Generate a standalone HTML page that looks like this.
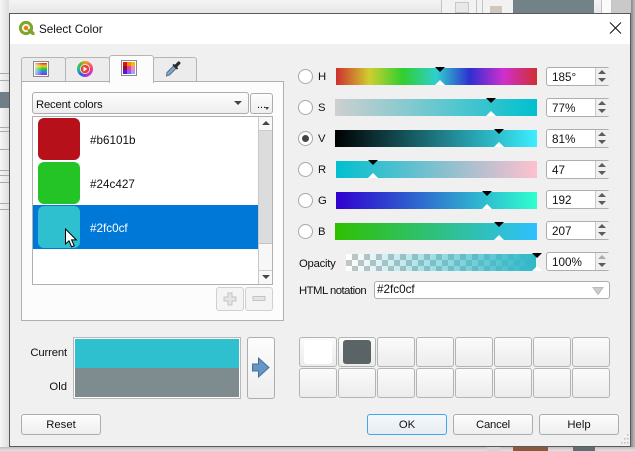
<!DOCTYPE html>
<html><head><meta charset="utf-8">
<style>
html,body{margin:0;padding:0}
body{width:635px;height:451px;position:relative;overflow:hidden;background:#f4f4f4;font:11.7px "Liberation Sans",sans-serif;color:#111}
div,span,svg{position:absolute;box-sizing:border-box}
.t{white-space:nowrap;line-height:14px}
.w{font-size:11.3px}
.btn{background:linear-gradient(#fdfdfd,#eeeeee);border:1px solid #adadad;border-radius:3px}
.tab{background:#ececec;border:1px solid #b5b5b5;border-bottom:none;border-radius:3px 3px 0 0}
.bar{height:17px}
.mk{width:0;height:0;border-left:5px solid transparent;border-right:5px solid transparent}
.mt{border-top:5px solid #000}
.mb{border-bottom:5px solid #fff}
.radio{width:15px;height:15px;border-radius:50%;border:1px solid #a8a8a8;background:#fff;left:298px}
.spin{left:546px;width:64px;height:19px;background:#fff;border:1px solid #adadad;border-radius:3px}
.spin i{position:absolute;left:48px;top:0;bottom:0;width:14px;background:#efefef;border-left:1px solid #c8c8c8}
.up,.dn{position:absolute;left:51px;width:0;height:0;border-left:4px solid transparent;border-right:4px solid transparent}
.up{top:2px;border-bottom:4px solid #5c5c5c}
.dn{top:10px;border-top:4px solid #5c5c5c}
.spin .t{left:5px;top:3px}
.cell{width:38px;height:30px;background:linear-gradient(#fbfbfb,#ececec);border:1px solid #b4b4b4;border-radius:3px}
</style></head><body>

<!-- background window behind -->
<div style="left:0;top:0;width:635px;height:13px;background:linear-gradient(#f4f4f4,#e6e6e6)"></div>
<div style="left:441px;top:0;width:72px;height:13px;border-left:1px solid #c4c4c4;background:#f2f2f2"></div>
<div style="left:476px;top:0;width:7px;height:13px;border-left:1px solid #c4c4c4;border-right:1px solid #c4c4c4"></div>
<div style="left:455px;top:2px;width:14px;height:11px;background:#e8e8e8;border:1px solid #c8c8c8"></div>
<div style="left:490px;top:6px;width:12px;height:7px;background:#cfc8ba"></div>
<div style="left:513px;top:0;width:81px;height:13px;background:#728286"></div>
<div style="left:601px;top:0;width:11px;height:13px;background:#fafafa;border-left:1px solid #c4c4c4;border-right:1px solid #c4c4c4"></div>
<div style="left:612px;top:0;width:23px;height:13px;background:#c9c9c9"></div>
<div style="left:631px;top:0;width:4px;height:451px;background:linear-gradient(90deg,#8a8a8a,#bdbdbd)"></div>

<div style="left:0;top:0;width:9px;height:451px;background:linear-gradient(90deg,#f6f6f6,#dedede)"></div>
<div style="left:0;top:73px;width:9px;height:1px;background:#aaa"></div>
<div style="left:0;top:80px;width:9px;height:1px;background:#aaa"></div>
<div style="left:0;top:92px;width:9px;height:16px;background:#6f7f85"></div>
<div style="left:0;top:127px;width:9px;height:1px;background:#aaa"></div>
<div style="left:0;top:131px;width:9px;height:1px;background:#aaa"></div>
<div style="left:0;top:149px;width:9px;height:1px;background:#aaa"></div>
<div style="left:0;top:170px;width:9px;height:1px;background:#aaa"></div>
<div style="left:0;top:175px;width:9px;height:1px;background:#aaa"></div>
<div style="left:0;top:182px;width:9px;height:1px;background:#aaa"></div>
<div style="left:0;top:203px;width:9px;height:1px;background:#aaa"></div>
<div style="left:0;top:209px;width:9px;height:1px;background:#aaa"></div>

<div style="left:0;top:447px;width:635px;height:4px;background:linear-gradient(#bdbdbd,#e4e4e4)"></div>
<div style="left:487px;top:447px;width:13px;height:4px;background:#d4d4d4"></div>
<div style="left:513px;top:447px;width:35px;height:4px;background:#8a5a40"></div>
<div style="left:573px;top:447px;width:22px;height:4px;background:#5f6e72"></div>

<!-- dialog -->
<div style="left:9px;top:13px;width:622px;height:434px;background:#f0f0f0;border:1px solid #5a5a5a"></div>
<div style="left:10px;top:14px;width:620px;height:30px;background:#fff"></div>

<!-- title -->
<svg style="left:18px;top:20px" width="17" height="17" viewBox="0 0 17 17">
<circle cx="8" cy="8" r="5.6" fill="#f7f3e4" stroke="#7da62f" stroke-width="3"/>
<circle cx="8" cy="8" r="2.2" fill="#ee7913"/>
<path d="M9 10l5 5h2.500v-2.500l-4-4z" fill="#7da62f"/>
</svg>
<div class="t" style="left:39px;top:23px">Select Color</div>
<svg style="left:609px;top:21px" width="14" height="14" viewBox="0 0 14 14"><path d="M1 1.500l11 11M12 1.500l-11 11" stroke="#111" stroke-width="1" fill="none"/></svg>

<!-- tabs -->
<div class="tab" style="left:21px;top:57px;width:45px;height:25px"></div>
<div class="tab" style="left:65px;top:57px;width:45px;height:25px"></div>
<div class="tab" style="left:153px;top:57px;width:44px;height:25px"></div>
<!-- pane -->
<div style="left:21px;top:81px;width:263px;height:240px;background:#fcfcfc;border:1px solid #b0b0b0"></div>
<div class="tab" style="left:109px;top:55px;width:45px;height:28px;background:#fcfcfc;border-bottom:none"></div>

<!-- tab icons -->
<svg style="left:33px;top:61px" width="16" height="16" viewBox="0 0 16 16">
<defs><linearGradient id="r" x1="0" y1="0" x2="0" y2="1"><stop offset="0" stop-color="#e22"/><stop offset=".25" stop-color="#ec2"/><stop offset=".5" stop-color="#2c2"/><stop offset=".72" stop-color="#28e"/><stop offset="1" stop-color="#92e"/></linearGradient>
<linearGradient id="w" x1="0" y1="0" x2="1" y2="0"><stop offset="0" stop-color="#fff" stop-opacity=".65"/><stop offset=".6" stop-color="#fff" stop-opacity="0"/></linearGradient></defs>
<rect x=".5" y=".5" width="15" height="15" fill="#fff" stroke="#8a8a8a"/>
<rect x="2" y="2" width="12" height="12" fill="url(#r)"/><rect x="2" y="2" width="12" height="12" fill="url(#w)"/>
</svg>
<div style="left:77px;top:61px;width:16px;height:16px;border-radius:50%;background:conic-gradient(#f0a020,#f03a90 25%,#b030e0 45%,#3060e0 60%,#20c0a0 75%,#40c030 88%,#f0a020)"></div>
<div style="left:80px;top:64px;width:10px;height:10px;border-radius:50%;background:#fff"></div>
<svg style="left:77px;top:61px" width="16" height="16" viewBox="0 0 16 16">
<circle cx="8" cy="8" r="4.300" fill="#e8452c"/><path d="M6.500 5.500l3.700 2.500-3.700 2.500z" fill="#fff"/>
</svg>
<svg style="left:121px;top:60px" width="16" height="16" viewBox="0 0 16 16">
<rect x=".5" y=".5" width="15" height="15" fill="#fff" stroke="#8a8a8a"/>
<rect x="2" y="2" width="4" height="4" fill="#e01010"/><rect x="6" y="2" width="4" height="4" fill="#f08a10"/><rect x="10" y="2" width="4" height="4" fill="#f5b810"/>
<rect x="2" y="6" width="4" height="4" fill="#8a1040"/><rect x="6" y="6" width="4" height="4" fill="#e0409a"/><rect x="10" y="6" width="4" height="4" fill="#f08ac0"/>
<rect x="2" y="10" width="4" height="4" fill="#6a10d0"/><rect x="6" y="10" width="4" height="4" fill="#8a60e8"/><rect x="10" y="10" width="4" height="4" fill="#b09af0"/>
</svg>
<svg style="left:165px;top:60px" width="17" height="17" viewBox="0 0 17 17">
<path d="M1.500 16l.5-3.500 6.500-6.500 2.500 2.500-6.500 6.500z" fill="#7fa8d0" stroke="#56687a" stroke-width=".9"/>
<path d="M9 4.500l1.500-.3 2.500-2.700c1.200-.8 3.200 1.200 2.300 2.400l-2.600 2.500-.3 1.600z" fill="#2a2a2a"/>
<path d="M8 4.500l4.500 4.500" stroke="#2a2a2a" stroke-width="1.700"/>
</svg>

<!-- combo -->
<div class="btn" style="left:32px;top:92px;width:217px;height:22px"></div>
<div class="t w" style="left:36px;top:98px;letter-spacing:-.2px">Recent colors</div>
<div style="left:234px;top:101px;width:0;height:0;border-left:4px solid transparent;border-right:4px solid transparent;border-top:4px solid #444"></div>
<div class="btn" style="left:250px;top:93px;width:23px;height:21px"></div>
<div class="t" style="left:257px;top:100px;font-size:11px;line-height:10px">...</div>
<div style="left:265px;top:107px;width:0;height:0;border-left:2.500px solid transparent;border-right:2.500px solid transparent;border-top:3px solid #444"></div>

<!-- list -->
<div style="left:32px;top:116px;width:241px;height:169px;background:#fff;border:1px solid #b0b0b0"></div>
<div style="left:33px;top:205px;width:225px;height:44px;background:#0078d7"></div>
<div style="left:38px;top:118px;width:42px;height:42px;background:#b6101b;border-radius:6px"></div>
<div style="left:38px;top:162px;width:42px;height:42px;background:#24c427;border-radius:6px"></div>
<div style="left:38px;top:206px;width:42px;height:42px;background:#2fc0cf;border-radius:6px"></div>
<div class="t" style="left:90px;top:134px">#b6101b</div>
<div class="t" style="left:90px;top:178px">#24c427</div>
<div class="t" style="left:90px;top:222px;color:#fff">#2fc0cf</div>
<svg style="left:64px;top:228px" width="15" height="21" viewBox="0 0 15 21"><path d="M1.500 1v15l3.500-3.200 2.600 6 2.600-1.100-2.600-5.800h4.700z" fill="#fff" stroke="#000" stroke-width="1"/></svg>
<!-- scrollbar -->
<div style="left:258px;top:117px;width:14px;height:167px;background:#f7f7f7;border-left:1px solid #c8c8c8"></div>
<div style="left:259px;top:130px;width:13px;height:1px;background:#ccc"></div>
<div style="left:259px;top:131px;width:13px;height:113px;background:#dcdcdc;border-bottom:1px solid #c4c4c4"></div>
<div style="left:259px;top:270px;width:13px;height:1px;background:#ccc"></div>
<div style="left:261.500px;top:121px;width:0;height:0;border-left:4px solid transparent;border-right:4px solid transparent;border-bottom:4px solid #444"></div>
<div style="left:261.500px;top:275px;width:0;height:0;border-left:4px solid transparent;border-right:4px solid transparent;border-top:4px solid #444"></div>
<!-- plus minus -->
<div class="btn" style="left:216px;top:287px;width:28px;height:24px;background:#f4f4f4;border-color:#d0d0d0"></div>
<div class="btn" style="left:245px;top:287px;width:28px;height:24px;background:#f4f4f4;border-color:#d0d0d0"></div>
<svg style="left:223px;top:292px" width="14" height="14" viewBox="0 0 14 14"><path d="M5 1h4v4h4v4h-4v4h-4v-4h-4v-4h4z" fill="#e4e4e4" stroke="#c4c4c4"/></svg>
<svg style="left:252px;top:295px" width="14" height="8" viewBox="0 0 14 8"><path d="M1 1.500h12v4h-12z" fill="#e4e4e4" stroke="#c4c4c4"/></svg>

<!-- radios + labels -->
<div class="radio" style="top:69px"></div><div class="t w" style="left:318px;top:70px">H</div>
<div class="radio" style="top:100px"></div><div class="t w" style="left:318px;top:101px">S</div>
<div class="radio" style="top:131px"></div><div style="left:302px;top:135px;width:7px;height:7px;border-radius:50%;background:#444"></div><div class="t w" style="left:318px;top:132px">V</div>
<div class="radio" style="top:162px"></div><div class="t w" style="left:318px;top:163px">R</div>
<div class="radio" style="top:193px"></div><div class="t w" style="left:318px;top:194px">G</div>
<div class="radio" style="top:224px"></div><div class="t w" style="left:318px;top:225px">B</div>
<div class="t w" style="left:299px;top:257px;letter-spacing:-.25px">Opacity</div>
<div class="t w" style="left:299px;top:284px;letter-spacing:-.5px">HTML notation</div>

<!-- bars -->
<div class="bar" style="left:336px;top:68px;width:201px;background:linear-gradient(90deg,#cf2f2f 0%,#cfcf2f 16.600%,#2fcf2f 33.300%,#2fcfcf 50%,#2f2fcf 66.600%,#cf2fcf 83.300%,#cf2f2f 100%)"></div>
<div class="bar" style="left:335px;top:99px;width:202px;background:linear-gradient(90deg,#cfcfcf,#00c0cf)"></div>
<div class="bar" style="left:335px;top:130px;width:202px;background:linear-gradient(90deg,#000 0%,#2fc0cf 81%,#3ceeff 100%)"></div>
<div class="bar" style="left:336px;top:161px;width:201px;background:linear-gradient(90deg,#00c0cf,#ffc0cf)"></div>
<div class="bar" style="left:336px;top:192px;width:201px;background:linear-gradient(90deg,#2f00cf,#2fffcf)"></div>
<div class="bar" style="left:335px;top:223px;width:202px;background:linear-gradient(90deg,#2fc000,#2fc0ff)"></div>
<div class="bar" style="left:346px;top:254px;width:190px;background:linear-gradient(90deg,rgba(47,192,207,0),#2fb8c8),repeating-conic-gradient(#c4c4c4 0 25%,#fff 0 50%) 0 0/12px 12px"></div>

<!-- markers -->
<div class="mk mt" style="left:435px;top:67px"></div><div class="mk mb" style="left:435px;top:80px"></div>
<div class="mk mt" style="left:486px;top:98px"></div><div class="mk mb" style="left:486px;top:111px"></div>
<div class="mk mt" style="left:494px;top:129px"></div><div class="mk mb" style="left:494px;top:142px"></div>
<div class="mk mt" style="left:368px;top:160px"></div><div class="mk mb" style="left:368px;top:173px"></div>
<div class="mk mt" style="left:482px;top:191px"></div><div class="mk mb" style="left:482px;top:204px"></div>
<div class="mk mt" style="left:494px;top:222px"></div><div class="mk mb" style="left:494px;top:235px"></div>
<div class="mk mt" style="left:532px;top:253px"></div><div class="mk mb" style="left:532px;top:266px"></div>

<!-- spins -->
<div class="spin" style="top:67px"><span class="t">185°</span><i></i><b class="up"></b><b class="dn"></b></div>
<div class="spin" style="top:98px"><span class="t">77%</span><i></i><b class="up"></b><b class="dn"></b></div>
<div class="spin" style="top:129px"><span class="t">81%</span><i></i><b class="up"></b><b class="dn"></b></div>
<div class="spin" style="top:160px"><span class="t">47</span><i></i><b class="up"></b><b class="dn"></b></div>
<div class="spin" style="top:190px"><span class="t">192</span><i></i><b class="up"></b><b class="dn"></b></div>
<div class="spin" style="top:221px"><span class="t">207</span><i></i><b class="up"></b><b class="dn"></b></div>
<div class="spin" style="top:252px"><span class="t">100%</span><i></i><b class="up" style="border-bottom-color:#aaa"></b><b class="dn"></b></div>

<!-- html notation -->
<div style="left:374px;top:281px;width:236px;height:18px;background:#fff;border:1px solid #adadad;border-radius:3px"></div>
<div class="t" style="left:377px;top:283px">#2fc0cf</div>
<svg style="left:592px;top:286px" width="12" height="10" viewBox="0 0 12 10"><path d="M1 1.500h10l-5 7z" fill="#ccc" stroke="#bbb"/></svg>

<!-- current/old -->
<div class="t w" style="right:568px;top:346px;letter-spacing:-.15px">Current</div>
<div class="t w" style="right:568px;top:380px">Old</div>
<div style="left:73px;top:337px;width:168px;height:62px;background:#fff;border:1px solid #b8b8b8"></div>
<div style="left:75px;top:339px;width:164px;height:29px;background:#2fc0cf"></div>
<div style="left:75px;top:368px;width:164px;height:29px;background:#7f8c8f"></div>
<div class="btn" style="left:247px;top:337px;width:28px;height:62px"></div>
<svg style="left:251px;top:357px" width="20" height="22" viewBox="0 0 20 22"><path d="M1.500 7h6v-6l10.500 9.500-10.500 9.500v-6h-6z" fill="#6496c8" stroke="#4a6f96"/></svg>

<!-- swatch grid -->
<div class="cell" style="left:299px;top:337px"></div>
<div class="cell" style="left:338px;top:337px"></div>
<div class="cell" style="left:377px;top:337px"></div>
<div class="cell" style="left:416px;top:337px"></div>
<div class="cell" style="left:455px;top:337px"></div>
<div class="cell" style="left:494px;top:337px"></div>
<div class="cell" style="left:533px;top:337px"></div>
<div class="cell" style="left:572px;top:337px"></div>
<div class="cell" style="left:299px;top:368px"></div>
<div class="cell" style="left:338px;top:368px"></div>
<div class="cell" style="left:377px;top:368px"></div>
<div class="cell" style="left:416px;top:368px"></div>
<div class="cell" style="left:455px;top:368px"></div>
<div class="cell" style="left:494px;top:368px"></div>
<div class="cell" style="left:533px;top:368px"></div>
<div class="cell" style="left:572px;top:368px"></div>
<div style="left:304px;top:340px;width:28px;height:24px;background:#fff;border-radius:3px"></div>
<div style="left:343px;top:340px;width:28px;height:24px;background:#5a6365;border-radius:3px"></div>

<!-- buttons -->
<div class="btn" style="left:21px;top:414px;width:80px;height:21px"></div>
<div class="t w" style="left:21px;top:418px;width:80px;text-align:center">Reset</div>
<div class="btn" style="left:367px;top:414px;width:80px;height:21px;border-color:#3fa7f0;background:linear-gradient(#f4f8fb,#e6ecf2)"></div>
<div class="t w" style="left:367px;top:418px;width:80px;text-align:center">OK</div>
<div class="btn" style="left:453px;top:414px;width:80px;height:21px"></div>
<div class="t w" style="left:453px;top:418px;width:80px;text-align:center;letter-spacing:-.2px">Cancel</div>
<div class="btn" style="left:539px;top:414px;width:80px;height:21px"></div>
<div class="t w" style="left:539px;top:418px;width:80px;text-align:center">Help</div>

<!-- size grip -->
<svg style="left:618px;top:433px" width="12" height="13" viewBox="0 0 12 13" fill="#bdbdbd">
<rect x="9" y="1" width="1.500" height="1.500"/><rect x="6" y="5" width="1.500" height="1.500"/><rect x="9" y="5" width="1.500" height="1.500"/>
<rect x="3" y="9" width="1.500" height="1.500"/><rect x="6" y="9" width="1.500" height="1.500"/><rect x="9" y="9" width="1.500" height="1.500"/>
</svg>
</body></html>
